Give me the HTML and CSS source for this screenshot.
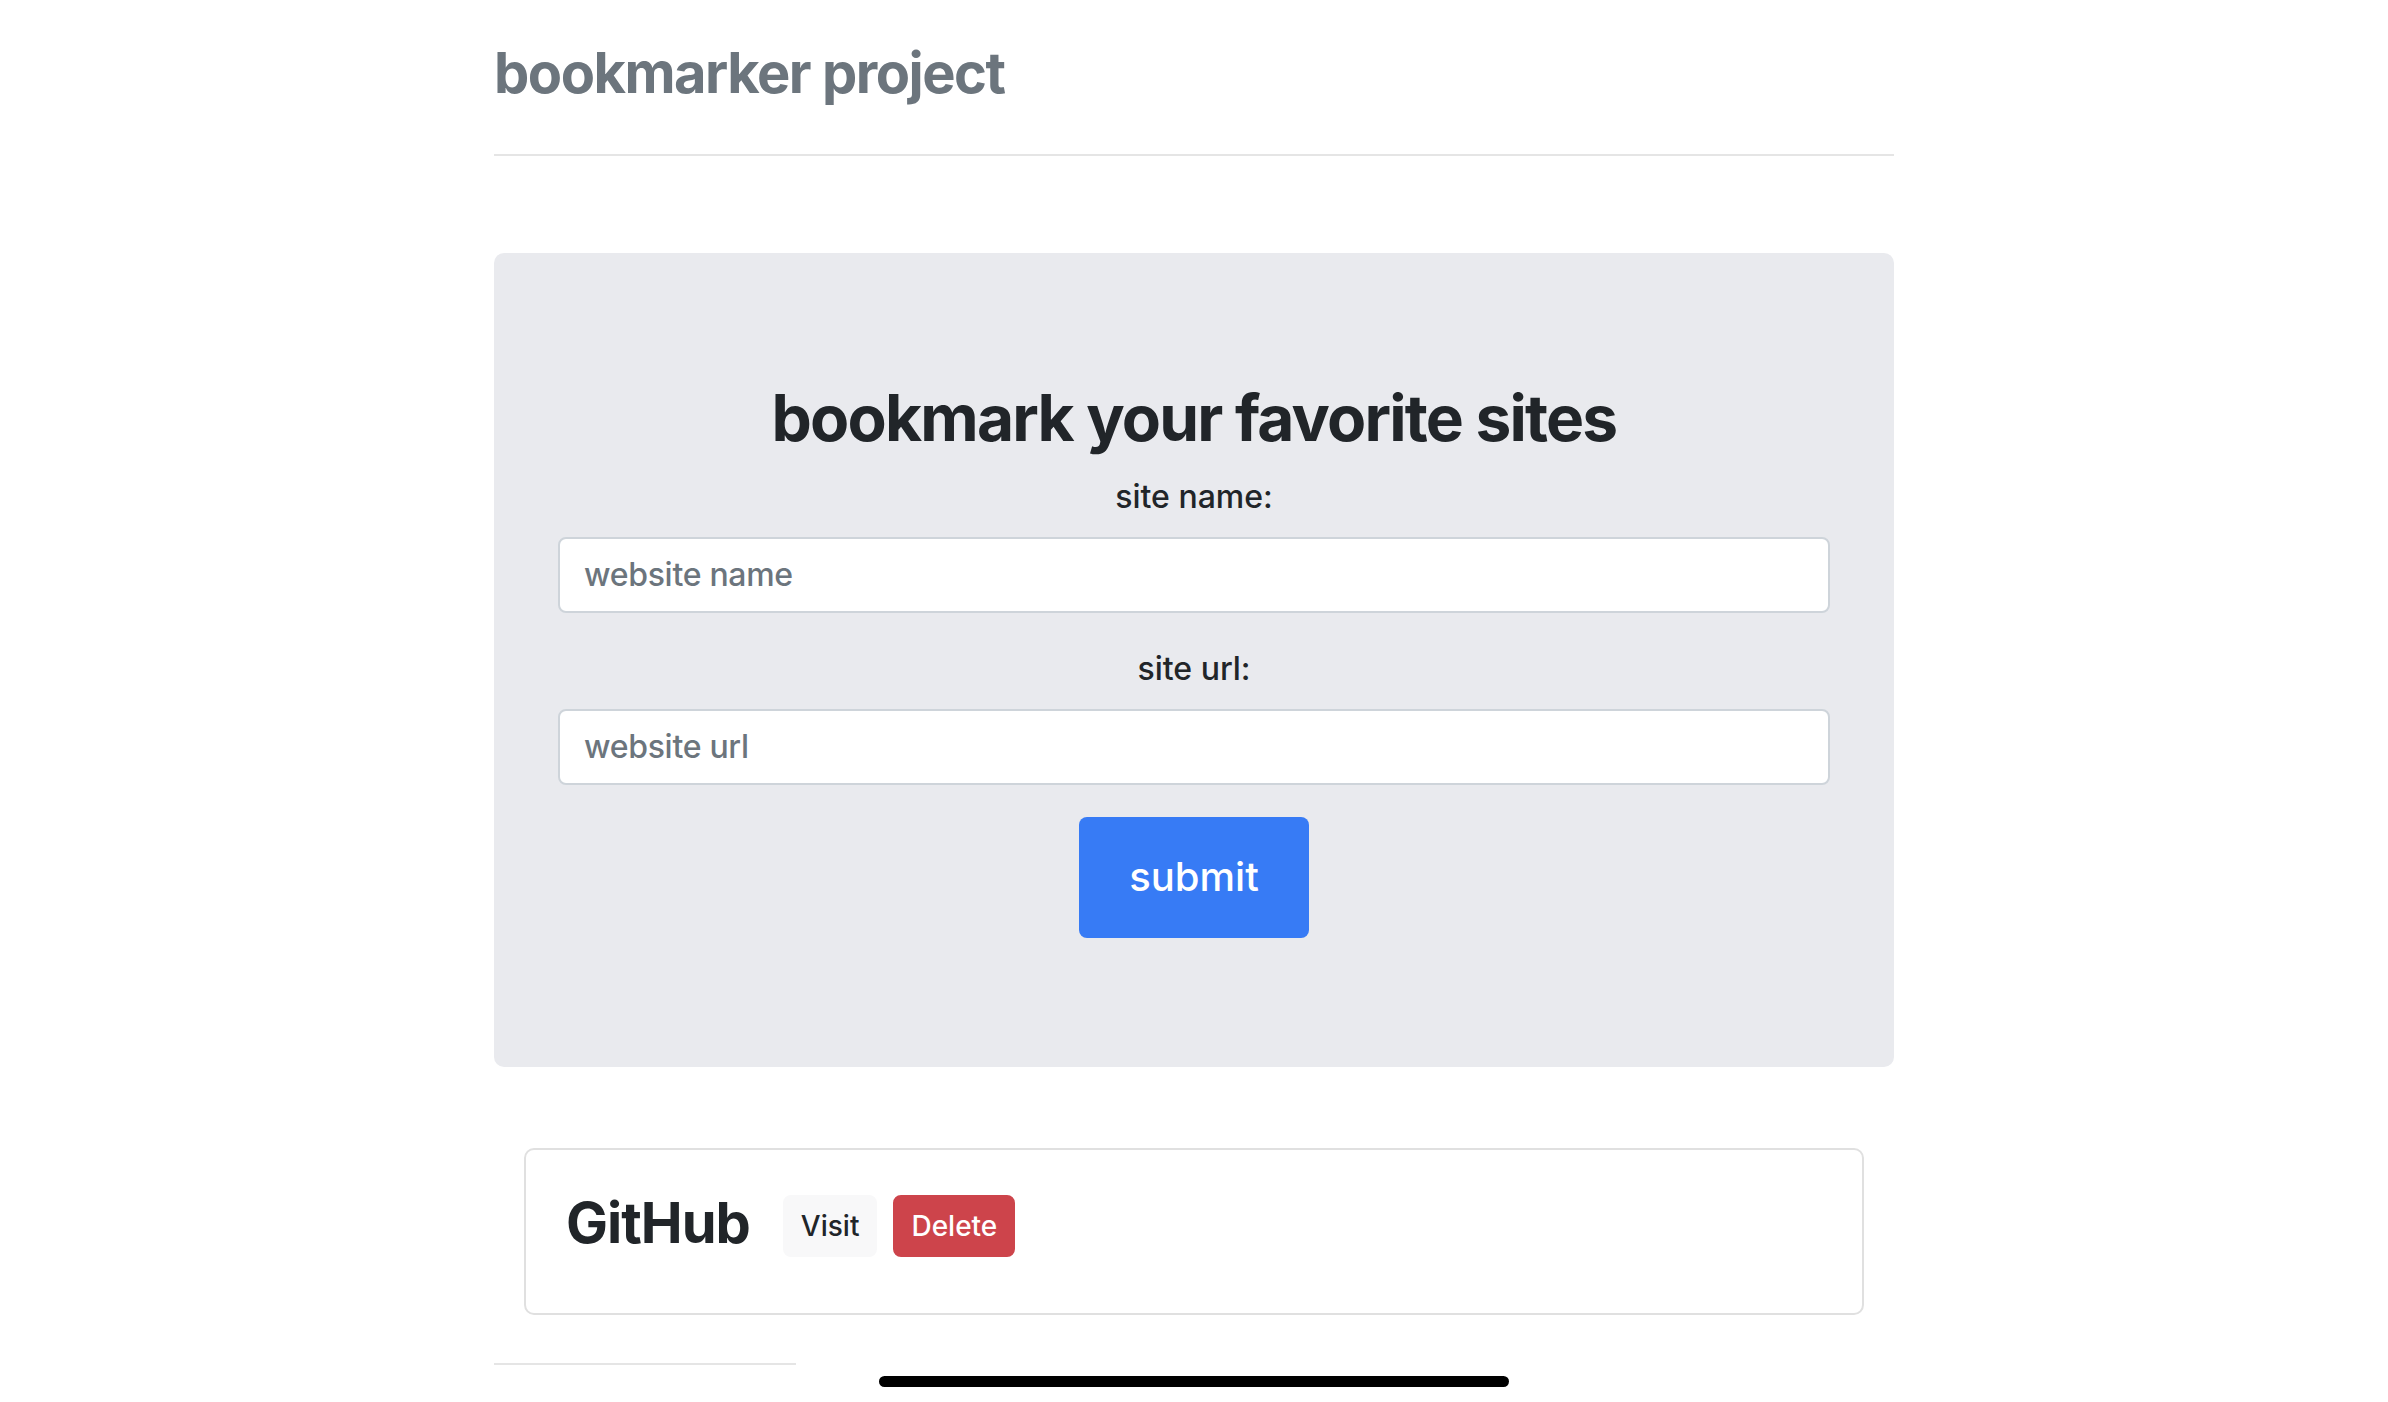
FILE: index.html
```html
<!DOCTYPE html>
<html lang="en">
<head>
<meta charset="utf-8">
<title>bookmarker project</title>
<link rel="stylesheet" href="styles.css">
</head>
<body>
  <div class="container">
    <header class="header">
      <h3 class="brand">bookmarker project</h3>
    </header>

    <div class="jumbotron">
      <h2 class="jumbo-title">bookmark your favorite sites</h2>
      <form class="bookmark-form">
        <div class="form-group">
          <label class="form-label" for="siteName">site name:</label>
          <input class="form-control" id="siteName" type="text" placeholder="website name">
        </div>
        <div class="form-group">
          <label class="form-label" for="siteUrl">site url:</label>
          <input class="form-control" id="siteUrl" type="text" placeholder="website url">
        </div>
        <button class="btn-submit" type="button">submit</button>
      </form>
    </div>

    <div class="results">
      <div class="bookmark-card">
        <h3 class="bookmark-name">GitHub</h3>
        <a class="btn btn-light" href="#">Visit</a>
        <a class="btn btn-danger" href="#">Delete</a>
      </div>
    </div>

    <footer class="footer"></footer>
  </div>
  <div class="home-indicator"></div>
</body>
</html>
```

FILE: styles.css
```css
* {
  box-sizing: border-box;
}

html, body {
  margin: 0;
  padding: 0;
  background: #ffffff;
}

body {
  font-family: "Inter", "Noto Sans", "Liberation Sans", sans-serif;
  color: #212529;
  font-size: 32px;
  line-height: 1.5;
}

.container {
  width: 1400px;
  margin: 0 auto;
  padding-top: 40px;
}

.header {
  padding-bottom: 31px;
  border-bottom: 2px solid #e5e5e5;
  margin-bottom: 97px;
}

.brand {
  margin: 0 0 16px;
  font-size: 56px;
  line-height: 1.2;
  font-weight: 700;
  color: #6c757d;
  letter-spacing: -1.5px;
}

.jumbotron {
  background: #e9eaee;
  border-radius: 10px;
  padding: 127px 64px 129px;
  text-align: center;
  margin-bottom: 81px;
}

.jumbo-title {
  margin: 0 0 16px;
  font-size: 64px;
  line-height: 1.2;
  font-weight: 700;
  letter-spacing: -1.8px;
}

.form-group {
  margin-bottom: 32px;
}

.form-label {
  display: block;
  margin-bottom: 16px;
  font-size: 32px;
  line-height: 48px;
  font-weight: 500;
}

.form-control {
  display: block;
  width: 100%;
  height: 76px;
  padding: 0 24px;
  font-family: inherit;
  font-size: 32px;
  font-weight: 500;
  letter-spacing: -0.3px;
  color: #495057;
  background: #ffffff;
  border: 2px solid #ced4da;
  border-radius: 8px;
  outline: none;
}

.form-control::placeholder {
  color: #6c757d;
  opacity: 1;
}

.btn-submit {
  display: inline-block;
  padding: 30px 50px 31px;
  font-family: inherit;
  font-size: 40px;
  line-height: 60px;
  font-weight: 500;
  color: #ffffff;
  background: #377bf5;
  border: none;
  border-radius: 8px;
}

.results {
  padding: 0 30px;
}

.bookmark-card {
  display: flex;
  align-items: flex-end;
  border: 2px solid #e0e0e0;
  border-radius: 10px;
  padding: 40px 40px 56px;
}

.bookmark-name {
  margin: 0 33px 0 0;
  font-size: 56px;
  line-height: 1.2;
  font-weight: 700;
  letter-spacing: -1px;
}

.btn {
  display: inline-block;
  padding: 8px 16px;
  font-size: 28px;
  line-height: 42px;
  font-weight: 500;
  text-decoration: none;
  border: 2px solid transparent;
  border-radius: 8px;
  margin-right: 16px;
}

.btn-light {
  color: #212529;
  background: #f8f8f9;
  border-color: #f8f8f9;
}

.btn-danger {
  color: #ffffff;
  background: #cd444b;
  border-color: #cd444b;
}

.footer {
  margin-top: 48px;
  width: 302px;
  border-top: 2px solid #e5e5e5;
}

.home-indicator {
  position: fixed;
  left: 50%;
  bottom: 15px;
  width: 630px;
  height: 11px;
  margin-left: -315px;
  background: #000000;
  border-radius: 6px;
}
```
